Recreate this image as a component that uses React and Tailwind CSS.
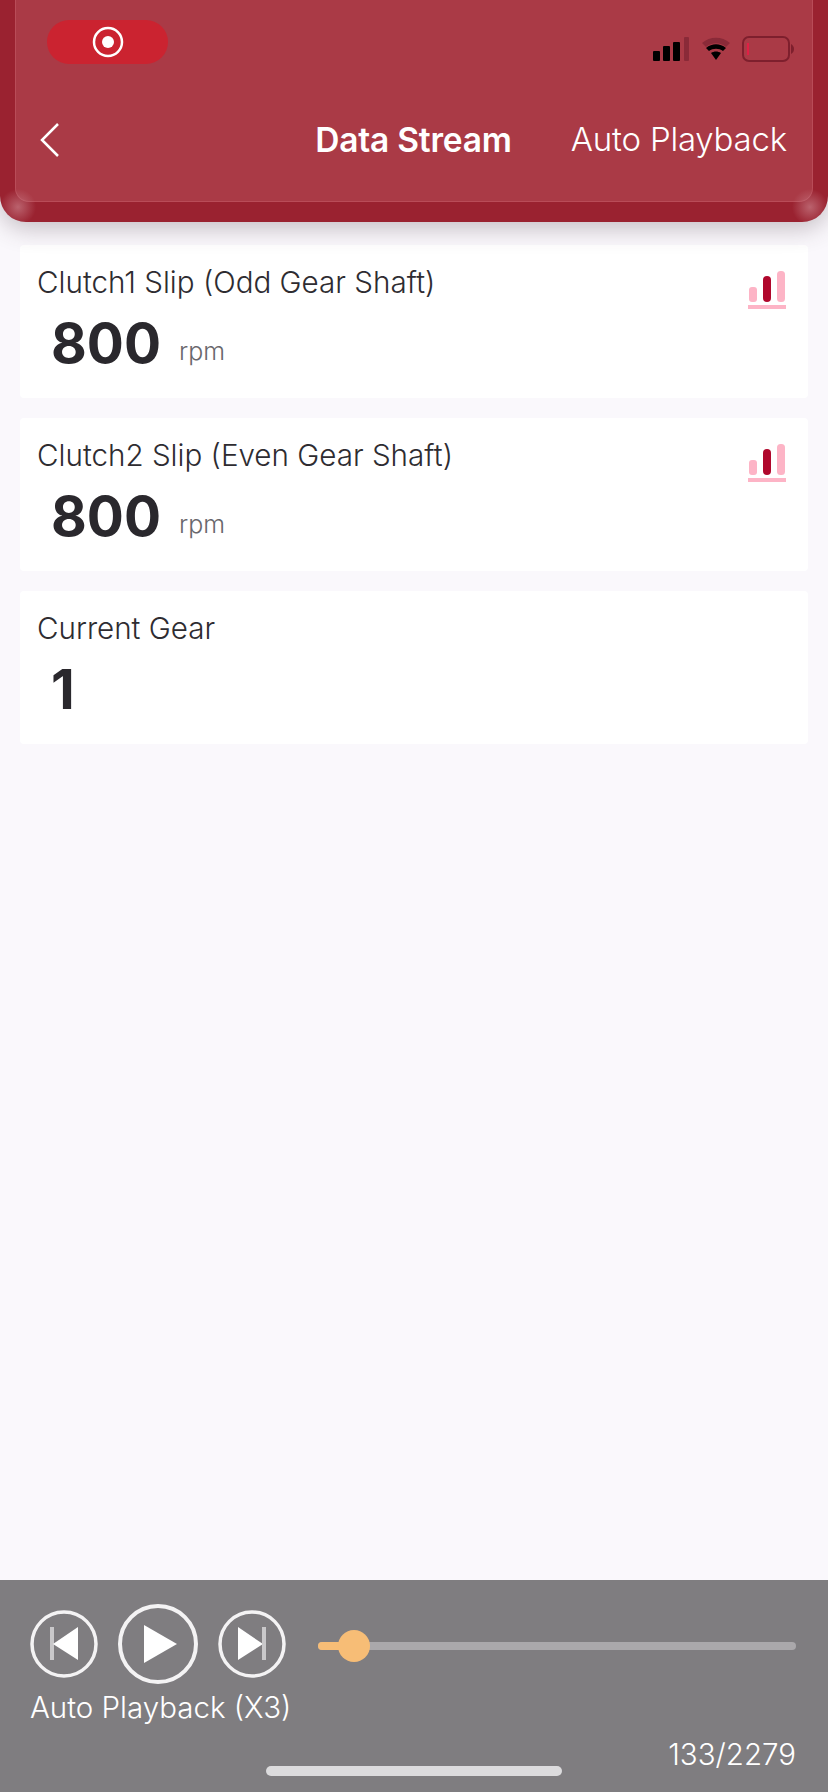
function ChartIcon() {
  return (
    <svg width="40" height="40" viewBox="0 0 40 40" className="mt-[25px] mr-[21px] shrink-0">
      <rect x="2" y="17" width="8" height="15" rx="3" fill="#fdb4c6" />
      <rect x="16" y="6" width="8" height="26" rx="4" fill="#b0072c" />
      <rect x="30" y="1" width="8" height="31" rx="3.5" fill="#fdb4c6" />
      <rect x="1" y="35" width="38" height="4" fill="#fdb4c6" />
    </svg>
  );
}

function StatusIcons() {
  return (
    <div className="flex items-center mt-[16px]">
      <svg width="37" height="24" viewBox="0 0 37 24" className="mr-[11px]">
        <rect x="0" y="14" width="7" height="10" rx="1" fill="#000" />
        <rect x="10" y="9" width="7" height="15" rx="1" fill="#000" />
        <rect x="20" y="5" width="7" height="19" rx="1" fill="#000" />
        <rect x="31" y="0" width="5" height="24" rx="1" fill="#8a2a38" />
      </svg>
      <svg width="30" height="24" viewBox="0 0 30 24" className="mr-[11px]">
        <path d="M1 6 C9 -1 21 -1 29 6 L25 10 C19 5 11 5 5 10 Z" fill="#8a2a38" />
        <path d="M5 11 C11 6 19 6 25 11 L22 14 C18 11 12 11 8 14 Z" fill="#000" />
        <path d="M10 16 C13 14 17 14 20 16 L15 23 Z" fill="#000" />
      </svg>
      <svg width="52" height="26" viewBox="0 0 52 26">
        <rect x="1" y="1" width="46" height="24" rx="6" fill="none" stroke="#7e1f2d" strokeWidth="2" />
        <rect x="5" y="7" width="2" height="12" fill="#e01f45" />
        <path d="M49 8 C51 9 52 11 52 13 C52 15 51 17 49 18 Z" fill="#7e1f2d" />
      </svg>
    </div>
  );
}

function Header() {
  return (
    <header className="relative bg-[#9a2230] h-[222px] px-[15px] pb-[20px] rounded-b-[26px] shadow-[0_6px_24px_rgba(70,50,60,0.3)] shrink-0 z-10 overflow-hidden">
      <div className="h-full bg-[#aa3a46] rounded-bl-[14px] rounded-br-[14px] border-l border-r border-b border-[#b94c58]">
        <div className="flex items-start justify-between pt-[20px] pl-[31px] pr-[18px]">
          <div className="w-[121px] h-[44px] rounded-full bg-[#cb2330] flex items-center justify-center">
            <svg width="32" height="32" viewBox="0 0 32 32">
              <circle cx="16" cy="16" r="14" fill="none" stroke="#fff" strokeWidth="2.5" />
              <circle cx="16" cy="16" r="6" fill="#fff" />
            </svg>
          </div>
          <StatusIcons />
        </div>
        <div className="grid grid-cols-[1fr_auto_1fr] items-center h-[40px] mt-[51px] pl-[24px] pr-[25px] text-white">
          <svg width="20" height="36" viewBox="0 0 20 36">
            <path d="M18 2 L2 18 L18 34" fill="none" stroke="#fff" strokeWidth="2.5" />
          </svg>
          <div className="text-[33.5px] font-semibold tracking-[-0.2px]">Data Stream</div>
          <div className="text-[33px] font-light text-right tracking-[-0.2px]">Auto Playback</div>
        </div>
      </div>
      <div className="absolute left-0 bottom-0 w-[36px] h-[44px] bg-[radial-gradient(circle_18px_at_18px_29px,rgba(200,125,135,0.7),rgba(170,50,65,0))]" />
      <div className="absolute right-0 bottom-0 w-[36px] h-[44px] bg-[radial-gradient(circle_18px_at_18px_29px,rgba(200,125,135,0.7),rgba(170,50,65,0))]" />
    </header>
  );
}

function DataCard({ label, value, unit, chart }) {
  return (
    <div className="h-[153px] bg-white rounded-[4px] flex justify-between">
      <div className="pl-[17px] pt-[18px]">
        <div className="text-[29.6px] leading-[38px] text-[#2e2c31] font-light">{label}</div>
        <div className="flex items-baseline pl-[14px] mt-[10px]">
          <span className="text-[55px] leading-[64px] font-bold text-[#2a282d]">{value}</span>
          {unit && <span className="text-[25px] text-[#69676c] ml-[18px] font-light -translate-y-[3px]">{unit}</span>}
        </div>
      </div>
      {chart && <ChartIcon />}
    </div>
  );
}

function SkipPrev() {
  return (
    <svg width="68" height="68" viewBox="0 0 68 68">
      <circle cx="34" cy="34" r="32" fill="none" stroke="#f4f3f4" strokeWidth="3.5" />
      <rect x="20" y="17" width="4" height="33" fill="#c9c8ca" />
      <path d="M23 34 L48 17 L48 50 Z" fill="#fff" />
    </svg>
  );
}

function SkipNext() {
  return (
    <svg width="68" height="68" viewBox="0 0 68 68">
      <circle cx="34" cy="34" r="32" fill="none" stroke="#f4f3f4" strokeWidth="3.5" />
      <path d="M20 17 L45 34 L20 50 Z" fill="#fff" />
      <rect x="44" y="17" width="4" height="33" fill="#c9c8ca" />
    </svg>
  );
}

function Play() {
  return (
    <svg width="80" height="80" viewBox="0 0 80 80">
      <circle cx="40" cy="40" r="38" fill="none" stroke="#f4f3f4" strokeWidth="4" />
      <path d="M26 21 L59 40 L26 59 Z" fill="#fff" />
    </svg>
  );
}

function Footer() {
  return (
    <footer className="relative h-[212px] bg-[#7f7d80] shrink-0 text-white font-light">
      <div className="flex items-start pt-[24px] pl-[30px] pr-[32px]">
        <div className="w-[288px] shrink-0">
          <div className="flex items-center gap-[20px] h-[80px]">
            <SkipPrev />
            <Play />
            <SkipNext />
          </div>
          <div className="text-[29.5px] leading-[36px] mt-[5px] whitespace-nowrap">Auto Playback (X3)</div>
        </div>
        <div className="relative flex-1 h-[8px] mt-[38px] bg-[#aaa8ab] rounded-full">
          <div className="absolute left-0 top-0 h-[8px] w-[36px] bg-[#f7bd76] rounded-l-full" />
          <div className="absolute left-[20px] -top-[12px] w-[32px] h-[32px] rounded-full bg-[#f7bd76]" />
        </div>
      </div>
      <div className="text-right text-[29.5px] leading-[34px] pr-[32px] mt-[12px]">133/2279</div>
      <div className="absolute left-[266px] bottom-[16px] w-[296px] h-[10px] rounded-full bg-[#dcdbdd]" />
    </footer>
  );
}

export default function App() {
  return (
    <div className="w-[828px] h-[1792px] flex flex-col bg-[#faf8fc] font-['Inter',sans-serif] overflow-hidden">
      <Header />
      <main className="flex-1 flex flex-col gap-[20px] pt-[23px] px-[20px]">
        <DataCard label="Clutch1 Slip (Odd Gear Shaft)" value="800" unit="rpm" chart />
        <DataCard label="Clutch2 Slip (Even Gear Shaft)" value="800" unit="rpm" chart />
        <DataCard label="Current Gear" value="1" />
      </main>
      <Footer />
    </div>
  );
}
